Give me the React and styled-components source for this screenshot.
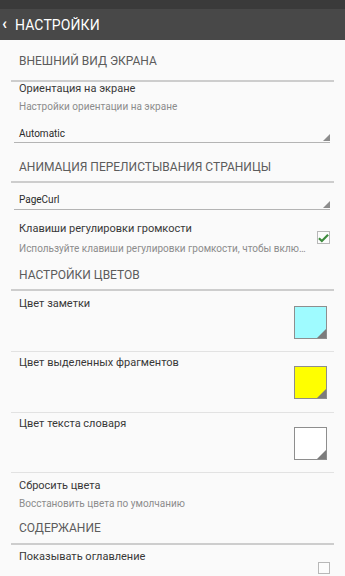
import React from 'react';
import styled, { createGlobalStyle } from 'styled-components';

const GlobalStyle = createGlobalStyle`
    html, body {
        margin: 0;
        padding: 0;
        background: #fafafa;
        font-family: Roboto, "Noto Sans", "Liberation Sans", sans-serif;
    }
    * {
        box-sizing: border-box;
    }
`

const Page = styled.div`
    width: 345px;
    height: 576px;
    overflow: hidden;
    background: #fafafa;
`

const StatusStrip = styled.div`
    height: 9px;
    background: #3a3a3a;
`

const ActionBar = styled.div`
    height: 31px;
    background: #484848;
    display: flex;
    align-items: center;
    padding-left: 2px;
    color: #fff;
`

const Chevron = styled.span`
    font-size: 16px;
    font-weight: bold;
    width: 13px;
    margin-top: -2px;
`

const Title = styled.div`
    font-size: 14px;
    letter-spacing: 0.1px;
`

const Category = styled.div`
    margin: 0 11px;
    padding: ${p => p.top}px 0 ${p => p.bottom}px 8px;
    font-size: 12px;
    line-height: 16px;
    color: #5c5c5c;
    text-transform: uppercase;
    border-bottom: 2px solid #cdcdcd;
`

const Pref = styled.div`
    display: flex;
    align-items: flex-start;
    padding: ${p => p.top}px 15px 0 19px;
`

const PrefText = styled.div`
    flex: 1;
    min-width: 0;
    display: flex;
    flex-direction: column;
`

const PrefTitle = styled.div`
    font-size: 11px;
    line-height: 14px;
    color: #383838;
`

const PrefSummary = styled.div`
    margin-top: ${p => p.gap}px;
    font-size: 10px;
    line-height: 12px;
    color: #8c8c8c;
    white-space: nowrap;
    overflow: hidden;
    text-overflow: ellipsis;
`

const Spinner = styled.div`
    position: relative;
    margin: ${p => p.top}px 15px 0 14px;
    padding: 0 0 ${p => p.bottom}px 5px;
    font-size: 10px;
    line-height: 12px;
    color: #2a2a2a;
    border-bottom: 1px solid #b4b4b4;
`

const SpinnerArrow = styled.span`
    position: absolute;
    right: 0;
    bottom: 1px;
    width: 0;
    height: 0;
    border-left: 7px solid transparent;
    border-bottom: 7px solid #8c8c8c;
`

const CheckBox = styled.div`
    flex-shrink: 0;
    width: ${p => p.size}px;
    height: ${p => p.size}px;
    margin: ${p => p.top}px 0 0 10px;
    border: 1px solid #b8b8b8;
    background: #fcfcfc;
    display: flex;
    align-items: center;
    justify-content: center;
`

const ColorRow = styled.div`
    height: ${p => p.height}px;
    display: flex;
    align-items: flex-start;
    margin: 0 11px;
    padding: 0 7px 0 8px;
    border-bottom: 1px solid #e2e2e2;
`

const ColorTitle = styled(PrefTitle)`
    flex: 1;
    margin-top: ${p => p.top}px;
`

const Swatch = styled.div`
    position: relative;
    width: 33px;
    height: 33px;
    margin-top: ${p => p.top}px;
    border: 1px solid #8e8e8e;
    background: ${p => p.color};
    overflow: hidden;

    &::after {
        content: '';
        position: absolute;
        right: 0;
        bottom: 0;
        border-left: 9px solid transparent;
        border-bottom: 9px solid #7c7c7c;
    }
`

const Check = () => (
    <svg width="12" height="10" viewBox="0 0 12 10">
        <path d="M1 5.2 L4.2 8.2 L11 1.4" fill="none" stroke="#3e8b3e" strokeWidth="2.4" />
    </svg>
)

const App = () => {
    return (
        <Page>
            <GlobalStyle />
            <StatusStrip />
            <ActionBar>
                <Chevron>‹</Chevron>
                <Title>НАСТРОЙКИ</Title>
            </ActionBar>

            <Category top={13} bottom={11}>Внешний вид экрана</Category>
            <Pref top={0}>
                <PrefText>
                    <PrefTitle>Ориентация на экране</PrefTitle>
                    <PrefSummary gap={5}>Настройки ориентации на экране</PrefSummary>
                </PrefText>
            </Pref>
            <Spinner top={15} bottom={2}>
                Automatic
                <SpinnerArrow />
            </Spinner>

            <Category top={16} bottom={6}>Анимация перелистывания страницы</Category>
            <Spinner top={11} bottom={3}>
                PageCurl
                <SpinnerArrow />
            </Spinner>
            <Pref top={12}>
                <PrefText>
                    <PrefTitle>Клавиши регулировки громкости</PrefTitle>
                    <PrefSummary gap={7}>Используйте клавиши регулировки громкости, чтобы включить перелистывание страниц</PrefSummary>
                </PrefText>
                <CheckBox top={9} size={13}><Check /></CheckBox>
            </Pref>

            <Category top={12} bottom={6}>Настройки цветов</Category>
            <ColorRow height={61}>
                <ColorTitle top={6}>Цвет заметки</ColorTitle>
                <Swatch top={15} color="#9ffbff" />
            </ColorRow>
            <ColorRow height={61}>
                <ColorTitle top={4}>Цвет выделенных фрагментов</ColorTitle>
                <Swatch top={14} color="#ffff00" />
            </ColorRow>
            <ColorRow height={60}>
                <ColorTitle top={4}>Цвет текста словаря</ColorTitle>
                <Swatch top={14} color="#ffffff" />
            </ColorRow>
            <Pref top={6}>
                <PrefText>
                    <PrefTitle>Сбросить цвета</PrefTitle>
                    <PrefSummary gap={5}>Восстановить цвета по умолчанию</PrefSummary>
                </PrefText>
            </Pref>

            <Category top={10} bottom={7}>Содержание</Category>
            <Pref top={5}>
                <PrefText>
                    <PrefTitle>Показывать оглавление</PrefTitle>
                    <PrefSummary gap={13}>Показывать оглавление при первом открытии книги</PrefSummary>
                </PrefText>
                <CheckBox top={12} size={12} />
            </Pref>
        </Page>
    )
}

export default App
